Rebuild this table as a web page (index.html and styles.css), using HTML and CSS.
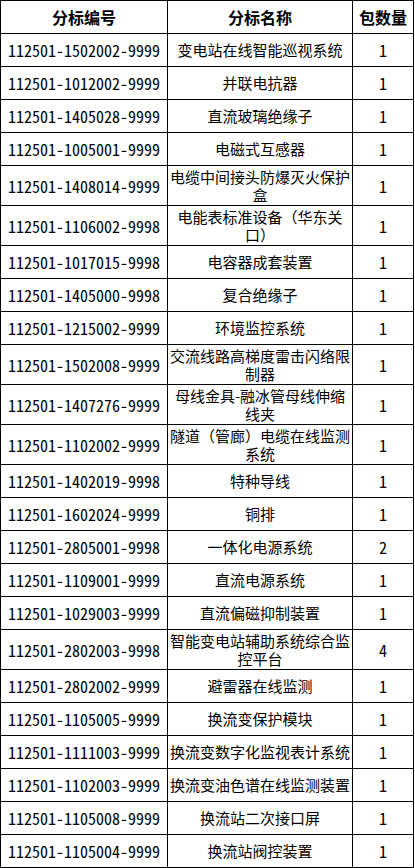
FILE: index.html
```html
<!DOCTYPE html>
<html lang="zh-CN">
<head>
<meta charset="utf-8">
<title>分标列表</title>
<link rel="stylesheet" href="styles.css">
</head>
<body>
<table class="bid-table">
  <colgroup>
    <col class="col-code">
    <col class="col-name">
    <col class="col-qty">
  </colgroup>
  <thead>
    <tr>
      <th>分标编号</th>
      <th>分标名称</th>
      <th>包数量</th>
    </tr>
  </thead>
  <tbody>
    <tr><td class="code">112501-1502002-9999</td><td class="name">变电站在线智能巡视系统</td><td class="qty">1</td></tr>
    <tr><td class="code">112501-1012002-9999</td><td class="name">并联电抗器</td><td class="qty">1</td></tr>
    <tr><td class="code">112501-1405028-9999</td><td class="name">直流玻璃绝缘子</td><td class="qty">1</td></tr>
    <tr><td class="code">112501-1005001-9999</td><td class="name">电磁式互感器</td><td class="qty">1</td></tr>
    <tr class="two"><td class="code">112501-1408014-9999</td><td class="name">电缆中间接头防爆灭火保护盒</td><td class="qty">1</td></tr>
    <tr class="two"><td class="code">112501-1106002-9998</td><td class="name">电能表标准设备（华东关口）</td><td class="qty">1</td></tr>
    <tr><td class="code">112501-1017015-9998</td><td class="name">电容器成套装置</td><td class="qty">1</td></tr>
    <tr><td class="code">112501-1405000-9998</td><td class="name">复合绝缘子</td><td class="qty">1</td></tr>
    <tr><td class="code">112501-1215002-9999</td><td class="name">环境监控系统</td><td class="qty">1</td></tr>
    <tr class="two"><td class="code">112501-1502008-9999</td><td class="name">交流线路高梯度雷击闪络限制器</td><td class="qty">1</td></tr>
    <tr class="two"><td class="code">112501-1407276-9999</td><td class="name">母线金具-融冰管母线伸缩线夹</td><td class="qty">1</td></tr>
    <tr class="two"><td class="code">112501-1102002-9999</td><td class="name">隧道（管廊）电缆在线监测系统</td><td class="qty">1</td></tr>
    <tr><td class="code">112501-1402019-9998</td><td class="name">特种导线</td><td class="qty">1</td></tr>
    <tr><td class="code">112501-1602024-9999</td><td class="name">铜排</td><td class="qty">1</td></tr>
    <tr><td class="code">112501-2805001-9998</td><td class="name">一体化电源系统</td><td class="qty">2</td></tr>
    <tr><td class="code">112501-1109001-9999</td><td class="name">直流电源系统</td><td class="qty">1</td></tr>
    <tr><td class="code">112501-1029003-9999</td><td class="name">直流偏磁抑制装置</td><td class="qty">1</td></tr>
    <tr class="two"><td class="code">112501-2802003-9998</td><td class="name">智能变电站辅助系统综合监控平台</td><td class="qty">4</td></tr>
    <tr><td class="code">112501-2802002-9999</td><td class="name">避雷器在线监测</td><td class="qty">1</td></tr>
    <tr><td class="code">112501-1105005-9999</td><td class="name">换流变保护模块</td><td class="qty">1</td></tr>
    <tr><td class="code">112501-1111003-9999</td><td class="name">换流变数字化监视表计系统</td><td class="qty">1</td></tr>
    <tr><td class="code">112501-1102003-9999</td><td class="name">换流变油色谱在线监测装置</td><td class="qty">1</td></tr>
    <tr><td class="code">112501-1105008-9999</td><td class="name">换流站二次接口屏</td><td class="qty">1</td></tr>
    <tr><td class="code">112501-1105004-9999</td><td class="name">换流站阀控装置</td><td class="qty">1</td></tr>
  </tbody>
</table>
</body>
</html>
```

FILE: styles.css
```css
html, body {
  margin: 0;
  padding: 0;
  background: #ffffff;
}

body {
  font-family: "Noto Sans CJK SC", "Noto Sans", sans-serif;
  color: #000000;
  font-size: 15px;
}

.bid-table {
  border-collapse: collapse;
  table-layout: fixed;
  width: 413px;
}

.col-code { width: 167px; }
.col-name { width: 185px; }
.col-qty  { width: 61px; }

.bid-table th,
.bid-table td {
  border: 1px solid #000000;
  text-align: center;
  vertical-align: middle;
  padding: 0 1px;
  line-height: 18px;
  height: 33px;
  box-sizing: border-box;
}

.bid-table th {
  font-size: 16px;
  font-weight: bold;
}

.bid-table tr.two td {
  height: 40px;
  padding-top: 1px;
  padding-bottom: 1px;
}

.code,
.qty {
  font-size: 16px;
  font-feature-settings: "hwid" 1;
}

.name {
  font-size: 15px;
}
```
